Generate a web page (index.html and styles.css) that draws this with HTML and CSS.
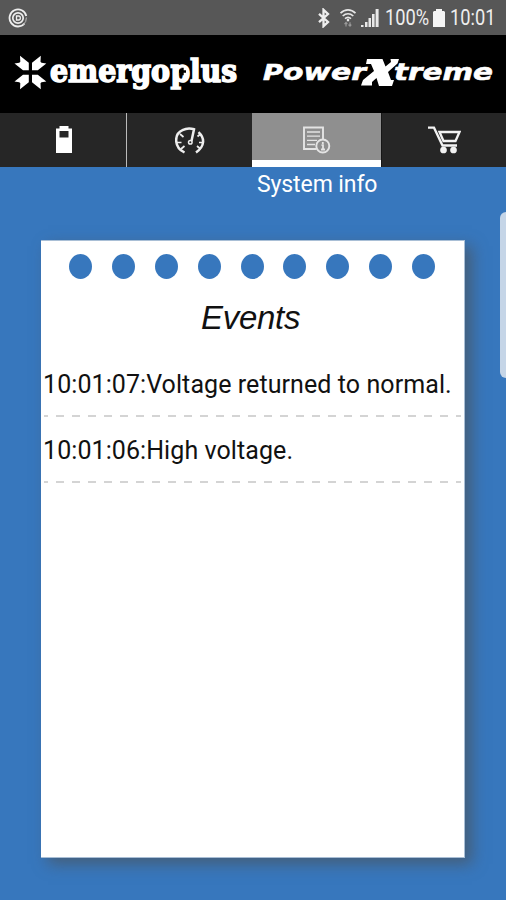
FILE: index.html
```html
<!DOCTYPE html>
<html lang="en">
<head>
<meta charset="utf-8">
<title>System info</title>
<link rel="stylesheet" href="styles.css">
</head>
<body>
<div class="app">
  <header class="status">
    <svg class="status-app" width="20" height="20" viewBox="0 0 20 20" fill="none" stroke="#eee">
      <path d="M16.500 15.500A8.500 8.500 0 1 1 18.300 8" stroke-width="1.800"/>
      <path d="M18.400 9.500A8.500 8.500 0 0 1 15 16.800" stroke-width="1" stroke="#bbb"/>
      <circle cx="10" cy="10" r="5.200" stroke-width="1.700"/>
      <path d="M8.500 8h2.200c2.200 0 2.200 4 0 4H8.500z" stroke-width="1.300"/>
    </svg>
    <div class="status-right">
      <svg class="bt" width="14" height="20" viewBox="0 0 14 20" fill="none" stroke="#eee" stroke-width="2.300"><path d="M2 5.800l9 8.200-4.500 4.200V1.800L11 6l-9 8.200"/></svg>
      <svg class="wifi" width="18" height="20" viewBox="0 0 18 20" fill="none" stroke="#e6e6e6" stroke-width="1.700">
        <path d="M1.500 5.200C6 .7 12 .7 16.500 5.200M3.700 8c3.200-3 7.400-3 10.600 0M6 10.700c2-1.800 4-1.800 6 0"/>
        <path d="M9 10.800v2.500" stroke-width="2.300"/>
        <path d="M7 18.500v-3.700m-1.500 1.400L7 14.500l1.300 1.500M11 14.200V18m-1.500-1.400 1.500 1.600 1.300-1.600" stroke="#999" stroke-width="1.200"/>
      </svg>
      <svg class="signal" width="18" height="18" viewBox="0 0 18 18" fill="#e8e8e8"><path d="M0 18v-2h2.500v2zM4 18v-5h2.500v5zM7.500 18V9H10v9zM11 18V5h2.600v13zM14.600 18V0h3v18z"/></svg>
      <span class="pct">100%</span>
      <svg class="cell" width="12" height="18" viewBox="0 0 12 18" fill="#f5f5f5"><path d="M3 0h6v2h2l1 1v15H0V3l1-1h2z"/></svg>
      <span class="clock">10:01</span>
    </div>
  </header>

  <div class="brands">
    <svg width="506" height="78" viewBox="0 35 506 78" fill="#fff">
      <g>
        <path id="ray" d="M28.800 70.300H23L14.500 63.500l4.800-.7 1-1-.3-6 8.800 7z"/>
        <use href="#ray" transform="matrix(-1 0 0 1 60.800 0)"/>
        <use href="#ray" transform="matrix(1 0 0 -1 0 145)"/>
        <use href="#ray" transform="matrix(-1 0 0 -1 60.800 145)"/>
      </g>
      <text class="emergo" x="50" y="81.500" textLength="120" lengthAdjust="spacingAndGlyphs">emergo</text>
      <text class="emergo" x="170.500" y="81.500" textLength="66.500" lengthAdjust="spacingAndGlyphs">plus</text>
      <path d="M181.300 67.800h2.400v2.500h2.300v2.400h-2.300v2.500h-2.400v-2.500H179v-2.400h2.300z" fill="#000"/>
      <text class="power" x="263" y="80" textLength="103" lengthAdjust="spacingAndGlyphs"><tspan class="cap">P</tspan>ower</text>
      <text class="power" x="394" y="80" textLength="99" lengthAdjust="spacingAndGlyphs">treme</text>
      <path d="M367 59h15.500l3 7.500 5.500-4.500-.5-3H399l-1.500 4.500-9.500 8.500 3 8h3l-2 6h-13l-2.500-8-4.500 4v3.500H361l2-5.500 11-9-3-7h-5z" stroke="#000" stroke-width="1.500" paint-order="stroke"/>
    </svg>
  </div>

  <nav class="tabs">
    <div class="tab">
      <svg width="18" height="28" viewBox="0 0 18 28"><path fill="#fff" d="M4.500 0h9v2.500H17V27H1V2.500h3.500z"/><path fill="#262626" d="M4.500 5h9v6.500h-9z"/></svg>
    </div>
    <div class="tab tab-gauge">
      <svg width="30" height="28" viewBox="0 0 30 28" fill="none" stroke="#eee" stroke-width="2.500">
        <path d="M9.500 25.500C-1.500 20-1 7 7.500 3.200 11 1.300 15 1 19 2.300L16.500 14M23.500 5.200c6.500 6 6.500 14-2.500 20.300"/>
        <circle cx="15.300" cy="15.300" r="1.800" stroke-width="1.500"/>
        <path d="M2 15.500h4.500M5 7l3.500 3M6 22l3.500-3M28 15.500h-4M25.500 22l-3.500-3M25.500 7l-3 2.500" stroke-width="1.700"/>
      </svg>
    </div>
    <div class="tab tab-active">
      <svg width="30" height="28" viewBox="0 0 30 28" fill="none" stroke="#e4e4e4" stroke-width="1.900">
        <path d="M14.500 23H2V1.500h19v12"/>
        <path d="M5 6h13M5 10.200h13M5 14.400h10M5 18.500h8" stroke-width="1.300"/>
        <circle cx="20.800" cy="20" r="6.500"/>
        <path d="M20.800 16v2M19.500 19.200h1.500v4.300M19 23.500h4" stroke-width="1.800"/>
      </svg>
    </div>
    <div class="tab tab-cart">
      <svg width="33" height="28" viewBox="0 0 33 28" fill="none" stroke="#f2f2f2" stroke-width="2.300">
        <path d="M0 1.700h6L14.500 19.500h14.500M11.500 6h20L27.500 15H15.500z"/>
        <circle cx="15.500" cy="24" r="2.200" fill="#f2f2f2"/><circle cx="25.500" cy="24" r="2.200" fill="#f2f2f2"/>
      </svg>
    </div>
  </nav>

  <main class="page">
    <div class="tab-label">System info</div>
    <section class="note">
      <div class="holes"><i></i><i></i><i></i><i></i><i></i><i></i><i></i><i></i><i></i></div>
      <h1 class="title">Events</h1>
      <div class="event">10:01:07:Voltage returned to normal.</div>
      <div class="event">10:01:06:High voltage.</div>
    </section>
    <div class="handle"></div>
  </main>
</div>
</body>
</html>
```

FILE: styles.css
```css
* { box-sizing: border-box; }
body { margin: 0; font-family: Roboto, "Liberation Sans", sans-serif; background: #3777bd; }
.app { width: 506px; height: 900px; overflow: hidden; display: flex; flex-direction: column; }

.status { height: 35px; flex: none; background: #575757; display: flex; align-items: center; justify-content: space-between; padding: 0 10px 0 8px; color: #eee; }
.status-right { display: flex; align-items: center; height: 35px; }
.wifi { margin-left: 8px; }
.signal { margin-left: 4px; }
.pct, .clock { font-size: 22px; line-height: 35px; white-space: nowrap; transform: scaleX(.83); transform-origin: 0 50%; }
.pct { width: 44px; margin-left: 6px; }
.cell { margin-left: 4px; }
.clock { width: 46px; margin-left: 5px; }

.brands { height: 78px; flex: none; background: #000; }
.brands svg { display: block; }
.emergo { font: bold 31px "DejaVu Serif Condensed", "DejaVu Serif", serif; font-stretch: condensed; stroke: #fff; stroke-width: 1.500px; }
.power { font: italic bold 23px "DejaVu Sans", sans-serif; stroke: #fff; stroke-width: .6px; }
.cap { font-size: 21px; }

.tabs { height: 54px; flex: none; display: grid; grid-template-columns: 127px 125px 130px 124px; background: #262626; }
.tab { display: flex; align-items: center; justify-content: center; border-right: 1px solid #bbb; }
.tab:first-child { padding-left: 1px; }
.tab-gauge { border-right: 0; padding-top: 1px; }
.tab-active { background: #8f8f8f; box-shadow: inset -1px 0 #161616, inset 0 -7px #fff; border-right: 0; }
.tab-cart { border-right: 0; }

.page { flex: 1; position: relative; background: #3777bd; }
.tab-label { margin-left: 257px; height: 35px; line-height: 35px; font-size: 23px; letter-spacing: -.1px; color: #fff; white-space: nowrap; }
.note { margin: 38px 0 0 41px; width: 424px; height: 618px; background: #fff; border: 1px solid #a9bfd6; border-width: 1px 1px 1px 0; box-shadow: 7px 6px 14px rgba(76, 84, 92, .7); }
.holes { display: flex; justify-content: space-between; padding: 13px 29px 0 28px; }
.holes i { width: 23px; height: 25px; border-radius: 50%; background: #3777bd; }
.title { margin: 18px 0 0 160px; height: 42px; font: italic 400 33px/42px "Liberation Sans", sans-serif; letter-spacing: -.3px; color: #111; }
.event { margin: 0 3px; height: 66px; display: flex; align-items: flex-end; padding-bottom: 15px; line-height: 34px; font-size: 25px; letter-spacing: .08px; color: #111; text-indent: -1px; white-space: nowrap; background: repeating-linear-gradient(90deg, #d4d4d4 0 8px, transparent 8px 16px) -4px 100% / 440px 2px no-repeat; }
.title + .event { height: 78px; }

.handle { position: absolute; right: -8px; top: 45px; width: 14px; height: 166px; border-radius: 6px; background: #c5d5e7; }
```
